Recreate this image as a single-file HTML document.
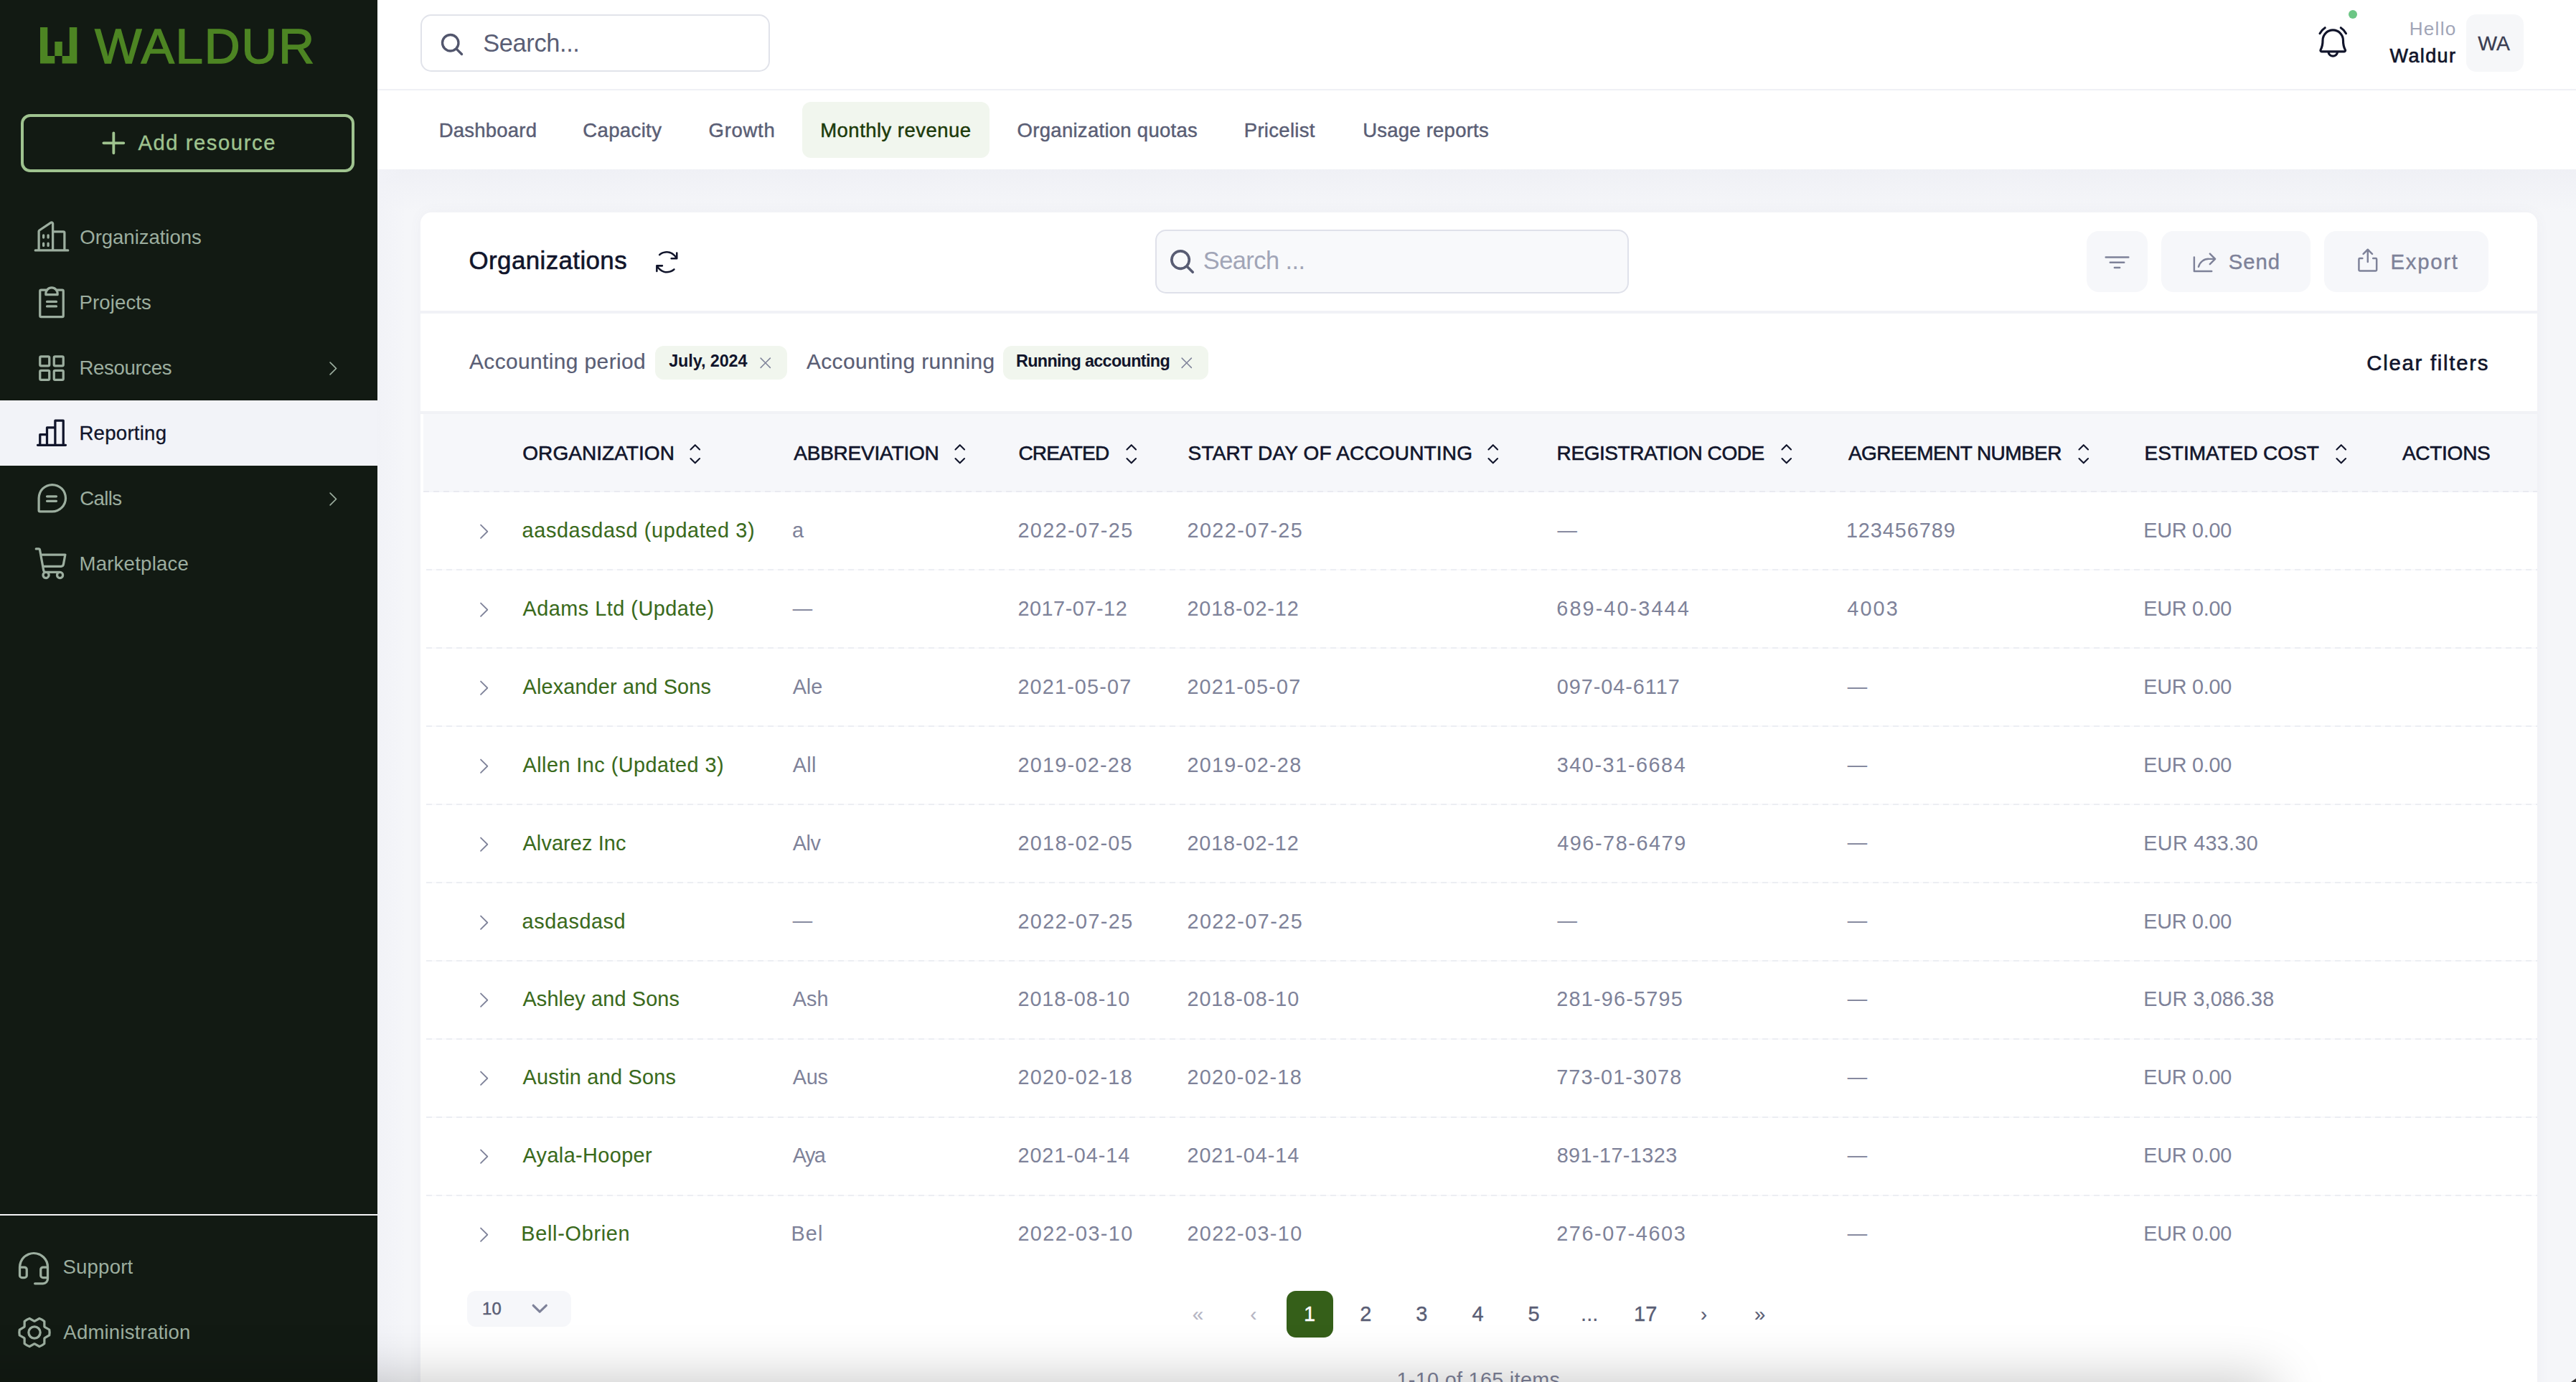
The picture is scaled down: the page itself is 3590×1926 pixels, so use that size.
<!DOCTYPE html>
<html lang="en"><head><meta charset="utf-8"><title>Waldur - Monthly revenue</title>
<style>
html,body{margin:0;padding:0}
body{width:3590px;height:1926px;overflow:hidden;position:relative;background:#f5f6f9;font-family:"Liberation Sans",sans-serif;}
.b{position:absolute}
.i{position:absolute;display:block;overflow:visible}
.t{position:absolute;white-space:pre;display:block;margin:0;padding:0;border:0;background:none;font-family:inherit;font-weight:400;text-decoration:none;text-align:left}
#shade{position:absolute;left:-200px;top:1932px;width:3360px;height:100px;border-radius:0 0 90px 0;box-shadow:0 0 75px 10px rgba(0,0,0,0.22);}
</style></head>
<body>
<main>
<section id="bg"><div class="b" style="left:526.00px;top:236.20px;width:3064.00px;height:1689.80px;background:linear-gradient(#eff0f5,#f5f6f9 60px,#f5f6f9)"></div>
<div class="b" style="left:526.00px;top:236.20px;width:40.00px;height:1689.80px;background:linear-gradient(90deg,#f1f2f7,rgba(245,246,249,0))"></div></section>
<header id="top"><div class="b" style="left:526.00px;top:0.00px;width:3064.00px;height:124.00px;background:#fff"></div>
<div class="b" style="left:526.00px;top:124.00px;width:3064.00px;height:2.00px;background:#eff0f5"></div>
<div class="b" style="left:586.40px;top:20.30px;width:487.10px;height:79.30px;border:2px solid #e1e3ea;border-radius:15px;box-sizing:border-box;background:#fff"></div>
<svg class="i" style="left:612.30px;top:44.20px" width="36" height="36" viewBox="0 0 256 256" fill="#52566d"><path d="M232.49,215.51,185,168a92.12,92.12,0,1,0-17,17l47.53,47.54a12,12,0,0,0,17-17ZM44,112a68,68,0,1,1,68,68A68.07,68.07,0,0,1,44,112Z"/></svg>
<span class="t" style="left:673.22px;top:42.88px;font-size:34.4px;line-height:34.4px;color:#5a5e75;letter-spacing:-0.370px;">Search...</span>
<svg class="i" style="left:3225.75px;top:34.35px" width="50.5" height="50.5" viewBox="0 0 256 256" fill="#11152b"><path d="M224,71.1a8,8,0,0,1-10.78-3.42,94.13,94.13,0,0,0-33.46-36.91,8,8,0,1,1,8.54-13.54,111.46,111.46,0,0,1,39.12,43.09A8,8,0,0,1,224,71.1ZM35.71,72a8,8,0,0,0,7.1-4.32A94.13,94.13,0,0,1,76.27,30.77a8,8,0,1,0-8.54-13.54A111.46,111.46,0,0,0,28.61,60.32,8,8,0,0,0,35.71,72Zm186.1,103.94A16,16,0,0,1,208,200H167.2a40,40,0,0,1-78.4,0H48a16,16,0,0,1-13.79-24.06C43.22,160.39,48,138.28,48,112a80,80,0,0,1,160,0C208,138.27,212.78,160.38,221.81,175.94ZM150.62,200H105.38a24,24,0,0,0,45.24,0ZM208,184c-10.64-18.27-16-42.49-16-72a64,64,0,0,0-128,0c0,29.52-5.38,53.74-16,72Z"/></svg>
<div class="b" style="left:3273.00px;top:14.00px;width:12.00px;height:12.00px;background:#6cc685;border-radius:50%"></div>
<span class="t" style="left:3357.76px;top:26.81px;font-size:26.1px;line-height:26.1px;color:#a1a5b7;letter-spacing:1.258px;">Hello</span>
<span class="t" style="left:3330.60px;top:64.94px;font-size:27px;line-height:27px;color:#11152b;letter-spacing:1.360px;-webkit-text-stroke:0.7px #11152b;">Waldur</span>
<div class="b" style="left:3437.00px;top:20.00px;width:80.00px;height:80.00px;background:#f6f7f9;border-radius:14px"></div>
<span class="t" style="left:3453.30px;top:45.96px;font-size:28.4px;line-height:28.4px;color:#3a3d52;letter-spacing:-0.122px;-webkit-text-stroke:0.3px #3a3d52;">WA</span></header>
<nav id="tabs"><div class="b" style="left:526.00px;top:126.00px;width:3064.00px;height:110.20px;background:#fff"></div>
<div class="b" style="left:1117.90px;top:142.20px;width:261.00px;height:77.60px;background:#f1f6ee;border-radius:12px"></div>
<a class="t" style="left:611.75px;top:167.62px;font-size:27.5px;line-height:27.5px;color:#5a5e75;letter-spacing:0.220px;-webkit-text-stroke:0.45px #5a5e75;">Dashboard</a>
<a class="t" style="left:812.31px;top:167.62px;font-size:27.5px;line-height:27.5px;color:#5a5e75;letter-spacing:0.370px;-webkit-text-stroke:0.45px #5a5e75;">Capacity</a>
<a class="t" style="left:987.61px;top:167.62px;font-size:27.5px;line-height:27.5px;color:#5a5e75;letter-spacing:0.698px;-webkit-text-stroke:0.45px #5a5e75;">Growth</a>
<a class="t" style="left:1143.25px;top:167.62px;font-size:27.5px;line-height:27.5px;color:#1c3a0a;letter-spacing:0.460px;-webkit-text-stroke:0.45px #1c3a0a;">Monthly revenue</a>
<a class="t" style="left:1417.61px;top:167.62px;font-size:27.5px;line-height:27.5px;color:#5a5e75;letter-spacing:0.284px;-webkit-text-stroke:0.45px #5a5e75;">Organization quotas</a>
<a class="t" style="left:1733.75px;top:167.62px;font-size:27.5px;line-height:27.5px;color:#5a5e75;letter-spacing:0.298px;-webkit-text-stroke:0.45px #5a5e75;">Pricelist</a>
<a class="t" style="left:1899.28px;top:167.62px;font-size:27.5px;line-height:27.5px;color:#5a5e75;letter-spacing:0.221px;-webkit-text-stroke:0.45px #5a5e75;">Usage reports</a></nav>
<section id="card"><div class="b" style="left:586.00px;top:296.00px;width:2950.00px;height:1670.00px;background:#fff;border-radius:15px;box-shadow:0 0 18px rgba(90,100,140,0.05)"></div>
<span class="t" style="left:653.56px;top:346.46px;font-size:34.9px;line-height:34.9px;color:#11152b;letter-spacing:0.396px;-webkit-text-stroke:0.6px #11152b;">Organizations</span>
<svg class="i" style="left:908.70px;top:344.70px" width="40.6" height="40.6" viewBox="0 0 256 256" fill="#11152b"><path d="M197.67,186.37a8,8,0,0,1,0,11.29C196.58,198.73,170.82,224,128,224c-37.39,0-64.53-22.4-80-39.85V208a8,8,0,0,1-16,0V160a8,8,0,0,1,8-8H88a8,8,0,0,1,0,16H55.44C67.76,183.35,93,208,128,208c36.1,0,58.14-21.4,58.36-21.62A8,8,0,0,1,197.67,186.37ZM216,40a8,8,0,0,0-8,8V71.85C192.53,54.4,165.39,32,128,32,85.18,32,59.42,57.27,58.34,58.34a8,8,0,0,0,11.3,11.34C69.86,69.4,91.9,48,128,48c35,0,60.24,24.65,72.56,40H168a8,8,0,0,0,0,16h48a8,8,0,0,0,8-8V48A8,8,0,0,0,216,40Z"/></svg>
<div class="b" style="left:1609.70px;top:320.20px;width:660.30px;height:88.40px;border:2px solid #dfe1ea;border-radius:15px;box-sizing:border-box;background:#f8f9fb"></div>
<svg class="i" style="left:1628.35px;top:345.15px" width="39.1" height="39.1" viewBox="0 0 256 256" fill="#585c73"><path d="M232.49,215.51,185,168a92.12,92.12,0,1,0-17,17l47.53,47.54a12,12,0,0,0,17-17ZM44,112a68,68,0,1,1,68,68A68.07,68.07,0,0,1,44,112Z"/></svg>
<span class="t" style="left:1676.82px;top:345.78px;font-size:34.4px;line-height:34.4px;color:#a1a5b7;letter-spacing:-0.546px;">Search ...</span>
<div class="b" style="left:2908.00px;top:322.00px;width:85.00px;height:84.50px;background:#f6f7fa;border-radius:17px"></div>
<svg class="i" style="left:2931.10px;top:344.90px" width="39" height="39" viewBox="0 0 256 256" fill="#7e8299"><path d="M200,136a8,8,0,0,1-8,8H64a8,8,0,0,1,0-16H192A8,8,0,0,1,200,136Zm32-56H24a8,8,0,0,0,0,16H232a8,8,0,0,0,0-16Zm-80,96H104a8,8,0,0,0,0,16h48a8,8,0,0,0,0-16Z"/></svg>
<div class="b" style="left:3012.20px;top:322.00px;width:207.80px;height:84.50px;background:#f6f7fa;border-radius:17px"></div>
<svg class="i" style="left:3052.80px;top:345.10px" width="39" height="39" viewBox="0 0 256 256" fill="#7e8299"><path d="M229.66,109.66l-48,48a8,8,0,0,1-11.32-11.32L204.69,112H165a88,88,0,0,0-85.23,66,8,8,0,0,1-15.5-4A103.94,103.94,0,0,1,165,96h39.71L170.34,61.66a8,8,0,0,1,11.32-11.32l48,48A8,8,0,0,1,229.66,109.66ZM192,208H40V88a8,8,0,0,0-16,0V216a8,8,0,0,0,8,8H192a8,8,0,0,0,0-16Z"/></svg>
<button class="t" style="left:3105.78px;top:350.00px;font-size:29.3px;line-height:29.3px;color:#7e8299;letter-spacing:0.977px;-webkit-text-stroke:0.4px #7e8299;">Send</button>
<div class="b" style="left:3239.30px;top:322.00px;width:228.50px;height:84.50px;background:#f6f7fa;border-radius:17px"></div>
<svg class="i" style="left:3280.20px;top:344.40px" width="39.6" height="39.6" viewBox="0 0 256 256" fill="#7e8299"><path d="M216,112v96a16,16,0,0,1-16,16H56a16,16,0,0,1-16-16V112A16,16,0,0,1,56,96H80a8,8,0,0,1,0,16H56v96H200V112H176a8,8,0,0,1,0-16h24A16,16,0,0,1,216,112ZM93.66,69.66,120,43.31V136a8,8,0,0,0,16,0V43.31l26.34,26.35a8,8,0,0,0,11.32-11.32l-40-40a8,8,0,0,0-11.32,0l-40,40A8,8,0,0,0,93.66,69.66Z"/></svg>
<button class="t" style="left:3331.51px;top:350.00px;font-size:29.3px;line-height:29.3px;color:#7e8299;letter-spacing:1.743px;-webkit-text-stroke:0.4px #7e8299;">Export</button>
<div class="b" style="left:586.00px;top:433.00px;width:2950.00px;height:4.00px;background:#f1f2f6"></div>
<span class="t" style="left:654.00px;top:489.49px;font-size:29.9px;line-height:29.9px;color:#5a5e75;letter-spacing:0.399px;-webkit-text-stroke:0.2px #5a5e75;">Accounting period</span>
<div class="b" style="left:913.00px;top:482.00px;width:183.80px;height:46.80px;background:#f1f6ee;border-radius:12px"></div>
<span class="t" style="left:932.20px;top:492.29px;font-size:23.4px;line-height:23.4px;color:#11152b;letter-spacing:-0.084px;font-weight:700;">July, 2024</span>
<svg class="i" style="left:1055.05px;top:494.25px" width="23.5" height="23.5" viewBox="0 0 256 256" fill="#7e8299"><path d="M205.66,194.34a8,8,0,0,1-11.32,11.32L128,139.31,61.66,205.66a8,8,0,0,1-11.32-11.32L116.69,128,50.34,61.66A8,8,0,0,1,61.66,50.34L128,116.69l66.34-66.35a8,8,0,0,1,11.32,11.32L139.31,128Z"/></svg>
<span class="t" style="left:1124.00px;top:489.49px;font-size:29.9px;line-height:29.9px;color:#5a5e75;letter-spacing:0.363px;-webkit-text-stroke:0.2px #5a5e75;">Accounting running</span>
<div class="b" style="left:1398.00px;top:482.00px;width:286.20px;height:46.80px;background:#f1f6ee;border-radius:12px"></div>
<span class="t" style="left:1415.94px;top:492.29px;font-size:23.4px;line-height:23.4px;color:#11152b;letter-spacing:-0.666px;font-weight:700;">Running accounting</span>
<svg class="i" style="left:1642.15px;top:494.25px" width="23.5" height="23.5" viewBox="0 0 256 256" fill="#7e8299"><path d="M205.66,194.34a8,8,0,0,1-11.32,11.32L128,139.31,61.66,205.66a8,8,0,0,1-11.32-11.32L116.69,128,50.34,61.66A8,8,0,0,1,61.66,50.34L128,116.69l66.34-66.35a8,8,0,0,1,11.32,11.32L139.31,128Z"/></svg>
<button class="t" style="left:3298.33px;top:490.60px;font-size:29.3px;line-height:29.3px;color:#11152b;letter-spacing:1.736px;-webkit-text-stroke:0.6px #11152b;">Clear filters</button>
<div class="b" style="left:586.00px;top:572.80px;width:2950.00px;height:4.20px;background:#f1f2f6"></div>
<div class="b" style="left:590.00px;top:577.00px;width:2946.00px;height:107.00px;background:#f6f7fa"></div>
<div class="b" style="left:590.00px;top:683.60px;width:2946.00px;height:2.00px;background:repeating-linear-gradient(90deg,#e9eaf1 0 8px,#f4f5f9 8px 14px)"></div>
<span class="t" style="left:728.29px;top:617.70px;font-size:28px;line-height:28px;color:#11152b;letter-spacing:0.049px;-webkit-text-stroke:0.6px #11152b;">ORGANIZATION</span>
<svg class="i" style="left:952.25px;top:616.25px" width="33.5" height="33.5" viewBox="0 0 256 256" fill="#11152b"><path d="M181.66,170.34a8,8,0,0,1,0,11.32l-48,48a8,8,0,0,1-11.32,0l-48-48a8,8,0,0,1,11.32-11.32L128,212.69l42.34-42.35A8,8,0,0,1,181.66,170.34Zm-96-84.68L128,43.31l42.34,42.35a8,8,0,0,0,11.32-11.32l-48-48a8,8,0,0,0-11.32,0l-48,48A8,8,0,0,0,85.66,85.66Z"/></svg>
<span class="t" style="left:1106.20px;top:617.70px;font-size:28px;line-height:28px;color:#11152b;letter-spacing:-0.207px;-webkit-text-stroke:0.6px #11152b;">ABBREVIATION</span>
<svg class="i" style="left:1321.25px;top:616.25px" width="33.5" height="33.5" viewBox="0 0 256 256" fill="#11152b"><path d="M181.66,170.34a8,8,0,0,1,0,11.32l-48,48a8,8,0,0,1-11.32,0l-48-48a8,8,0,0,1,11.32-11.32L128,212.69l42.34-42.35A8,8,0,0,1,181.66,170.34Zm-96-84.68L128,43.31l42.34,42.35a8,8,0,0,0,11.32-11.32l-48-48a8,8,0,0,0-11.32,0l-48,48A8,8,0,0,0,85.66,85.66Z"/></svg>
<span class="t" style="left:1419.39px;top:617.70px;font-size:28px;line-height:28px;color:#11152b;letter-spacing:-0.824px;-webkit-text-stroke:0.6px #11152b;">CREATED</span>
<svg class="i" style="left:1560.45px;top:616.25px" width="33.5" height="33.5" viewBox="0 0 256 256" fill="#11152b"><path d="M181.66,170.34a8,8,0,0,1,0,11.32l-48,48a8,8,0,0,1-11.32,0l-48-48a8,8,0,0,1,11.32-11.32L128,212.69l42.34-42.35A8,8,0,0,1,181.66,170.34Zm-96-84.68L128,43.31l42.34,42.35a8,8,0,0,0,11.32-11.32l-48-48a8,8,0,0,0-11.32,0l-48,48A8,8,0,0,0,85.66,85.66Z"/></svg>
<span class="t" style="left:1655.62px;top:617.70px;font-size:28px;line-height:28px;color:#11152b;letter-spacing:0.172px;-webkit-text-stroke:0.6px #11152b;">START DAY OF ACCOUNTING</span>
<svg class="i" style="left:2064.45px;top:616.25px" width="33.5" height="33.5" viewBox="0 0 256 256" fill="#11152b"><path d="M181.66,170.34a8,8,0,0,1,0,11.32l-48,48a8,8,0,0,1-11.32,0l-48-48a8,8,0,0,1,11.32-11.32L128,212.69l42.34-42.35A8,8,0,0,1,181.66,170.34Zm-96-84.68L128,43.31l42.34,42.35a8,8,0,0,0,11.32-11.32l-48-48a8,8,0,0,0-11.32,0l-48,48A8,8,0,0,0,85.66,85.66Z"/></svg>
<span class="t" style="left:2169.61px;top:617.70px;font-size:28px;line-height:28px;color:#11152b;letter-spacing:-0.440px;-webkit-text-stroke:0.6px #11152b;">REGISTRATION CODE</span>
<svg class="i" style="left:2472.85px;top:616.25px" width="33.5" height="33.5" viewBox="0 0 256 256" fill="#11152b"><path d="M181.66,170.34a8,8,0,0,1,0,11.32l-48,48a8,8,0,0,1-11.32,0l-48-48a8,8,0,0,1,11.32-11.32L128,212.69l42.34-42.35A8,8,0,0,1,181.66,170.34Zm-96-84.68L128,43.31l42.34,42.35a8,8,0,0,0,11.32-11.32l-48-48a8,8,0,0,0-11.32,0l-48,48A8,8,0,0,0,85.66,85.66Z"/></svg>
<span class="t" style="left:2576.00px;top:617.70px;font-size:28px;line-height:28px;color:#11152b;letter-spacing:-0.573px;-webkit-text-stroke:0.6px #11152b;">AGREEMENT NUMBER</span>
<svg class="i" style="left:2887.05px;top:616.25px" width="33.5" height="33.5" viewBox="0 0 256 256" fill="#11152b"><path d="M181.66,170.34a8,8,0,0,1,0,11.32l-48,48a8,8,0,0,1-11.32,0l-48-48a8,8,0,0,1,11.32-11.32L128,212.69l42.34-42.35A8,8,0,0,1,181.66,170.34Zm-96-84.68L128,43.31l42.34,42.35a8,8,0,0,0,11.32-11.32l-48-48a8,8,0,0,0-11.32,0l-48,48A8,8,0,0,0,85.66,85.66Z"/></svg>
<span class="t" style="left:2988.61px;top:617.70px;font-size:28px;line-height:28px;color:#11152b;letter-spacing:-0.043px;-webkit-text-stroke:0.6px #11152b;">ESTIMATED COST</span>
<svg class="i" style="left:3245.95px;top:616.25px" width="33.5" height="33.5" viewBox="0 0 256 256" fill="#11152b"><path d="M181.66,170.34a8,8,0,0,1,0,11.32l-48,48a8,8,0,0,1-11.32,0l-48-48a8,8,0,0,1,11.32-11.32L128,212.69l42.34-42.35A8,8,0,0,1,181.66,170.34Zm-96-84.68L128,43.31l42.34,42.35a8,8,0,0,0,11.32-11.32l-48-48a8,8,0,0,0-11.32,0l-48,48A8,8,0,0,0,85.66,85.66Z"/></svg>
<span class="t" style="left:3347.90px;top:617.70px;font-size:28px;line-height:28px;color:#11152b;letter-spacing:-0.264px;-webkit-text-stroke:0.6px #11152b;">ACTIONS</span>
<svg class="i" style="left:659.45px;top:726.35px" width="29.5" height="29.5" viewBox="0 0 256 256" fill="#7e8299"><path d="M181.66,133.66l-80,80a8,8,0,0,1-11.32-11.32L164.69,128,90.34,53.66a8,8,0,0,1,11.32-11.32l80,80A8,8,0,0,1,181.66,133.66Z"/></svg>
<a class="t" style="left:727.60px;top:725.32px;font-size:28.8px;line-height:28.8px;color:#3a6a1c;letter-spacing:0.633px;-webkit-text-stroke:0.1px #3a6a1c;">aasdasdasd (updated 3)</a>
<span class="t" style="left:1103.90px;top:725.32px;font-size:28.8px;line-height:28.8px;color:#7e8299;">a</span>
<span class="t" style="left:1418.45px;top:725.32px;font-size:28.8px;line-height:28.8px;color:#7e8299;letter-spacing:1.379px;">2022-07-25</span>
<span class="t" style="left:1654.45px;top:725.32px;font-size:28.8px;line-height:28.8px;color:#7e8299;letter-spacing:1.435px;">2022-07-25</span>
<span class="t" style="left:2170.60px;top:724.99px;font-size:27.3px;line-height:27.3px;color:#7e8299;-webkit-text-stroke:0.15px #7e8299;">—</span>
<span class="t" style="left:2572.90px;top:725.32px;font-size:28.8px;line-height:28.8px;color:#7e8299;letter-spacing:0.953px;">123456789</span>
<span class="t" style="left:2987.35px;top:725.32px;font-size:28.8px;line-height:28.8px;color:#7e8299;letter-spacing:-0.284px;">EUR 0.00</span>
<div class="b" style="left:594.00px;top:793.30px;width:2942.00px;height:2.00px;background:repeating-linear-gradient(90deg,#eceef3 0 8px,#fafafc 8px 14px)"></div>
<svg class="i" style="left:659.45px;top:835.20px" width="29.5" height="29.5" viewBox="0 0 256 256" fill="#7e8299"><path d="M181.66,133.66l-80,80a8,8,0,0,1-11.32-11.32L164.69,128,90.34,53.66a8,8,0,0,1,11.32-11.32l80,80A8,8,0,0,1,181.66,133.66Z"/></svg>
<a class="t" style="left:728.50px;top:834.17px;font-size:28.8px;line-height:28.8px;color:#3a6a1c;letter-spacing:0.516px;-webkit-text-stroke:0.1px #3a6a1c;">Adams Ltd (Update)</a>
<span class="t" style="left:1104.80px;top:833.84px;font-size:27.3px;line-height:27.3px;color:#7e8299;-webkit-text-stroke:0.15px #7e8299;">—</span>
<span class="t" style="left:1418.45px;top:834.17px;font-size:28.8px;line-height:28.8px;color:#7e8299;letter-spacing:0.546px;">2017-07-12</span>
<span class="t" style="left:1654.45px;top:834.17px;font-size:28.8px;line-height:28.8px;color:#7e8299;letter-spacing:0.879px;">2018-02-12</span>
<span class="t" style="left:2169.25px;top:834.17px;font-size:28.8px;line-height:28.8px;color:#7e8299;letter-spacing:2.114px;">689-40-3444</span>
<span class="t" style="left:2574.25px;top:834.17px;font-size:28.8px;line-height:28.8px;color:#7e8299;letter-spacing:2.116px;">4003</span>
<span class="t" style="left:2987.35px;top:834.17px;font-size:28.8px;line-height:28.8px;color:#7e8299;letter-spacing:-0.284px;">EUR 0.00</span>
<div class="b" style="left:594.00px;top:902.30px;width:2942.00px;height:2.00px;background:repeating-linear-gradient(90deg,#eceef3 0 8px,#fafafc 8px 14px)"></div>
<svg class="i" style="left:659.45px;top:944.05px" width="29.5" height="29.5" viewBox="0 0 256 256" fill="#7e8299"><path d="M181.66,133.66l-80,80a8,8,0,0,1-11.32-11.32L164.69,128,90.34,53.66a8,8,0,0,1,11.32-11.32l80,80A8,8,0,0,1,181.66,133.66Z"/></svg>
<a class="t" style="left:728.50px;top:943.02px;font-size:28.8px;line-height:28.8px;color:#3a6a1c;letter-spacing:0.178px;-webkit-text-stroke:0.1px #3a6a1c;">Alexander and Sons</a>
<span class="t" style="left:1104.80px;top:943.02px;font-size:28.8px;line-height:28.8px;color:#7e8299;letter-spacing:-0.130px;">Ale</span>
<span class="t" style="left:1418.45px;top:943.02px;font-size:28.8px;line-height:28.8px;color:#7e8299;letter-spacing:1.157px;">2021-05-07</span>
<span class="t" style="left:1654.45px;top:943.02px;font-size:28.8px;line-height:28.8px;color:#7e8299;letter-spacing:1.157px;">2021-05-07</span>
<span class="t" style="left:2169.70px;top:943.02px;font-size:28.8px;line-height:28.8px;color:#7e8299;letter-spacing:0.978px;">097-04-6117</span>
<span class="t" style="left:2574.70px;top:942.69px;font-size:27.3px;line-height:27.3px;color:#7e8299;-webkit-text-stroke:0.15px #7e8299;">—</span>
<span class="t" style="left:2987.35px;top:943.02px;font-size:28.8px;line-height:28.8px;color:#7e8299;letter-spacing:-0.284px;">EUR 0.00</span>
<div class="b" style="left:594.00px;top:1011.30px;width:2942.00px;height:2.00px;background:repeating-linear-gradient(90deg,#eceef3 0 8px,#fafafc 8px 14px)"></div>
<svg class="i" style="left:659.45px;top:1052.90px" width="29.5" height="29.5" viewBox="0 0 256 256" fill="#7e8299"><path d="M181.66,133.66l-80,80a8,8,0,0,1-11.32-11.32L164.69,128,90.34,53.66a8,8,0,0,1,11.32-11.32l80,80A8,8,0,0,1,181.66,133.66Z"/></svg>
<a class="t" style="left:728.50px;top:1051.87px;font-size:28.8px;line-height:28.8px;color:#3a6a1c;letter-spacing:0.473px;-webkit-text-stroke:0.1px #3a6a1c;">Allen Inc (Updated 3)</a>
<span class="t" style="left:1104.80px;top:1051.87px;font-size:28.8px;line-height:28.8px;color:#7e8299;letter-spacing:0.291px;">All</span>
<span class="t" style="left:1418.45px;top:1051.87px;font-size:28.8px;line-height:28.8px;color:#7e8299;letter-spacing:1.268px;">2019-02-28</span>
<span class="t" style="left:1654.45px;top:1051.87px;font-size:28.8px;line-height:28.8px;color:#7e8299;letter-spacing:1.268px;">2019-02-28</span>
<span class="t" style="left:2169.70px;top:1051.87px;font-size:28.8px;line-height:28.8px;color:#7e8299;letter-spacing:1.569px;">340-31-6684</span>
<span class="t" style="left:2574.70px;top:1051.54px;font-size:27.3px;line-height:27.3px;color:#7e8299;-webkit-text-stroke:0.15px #7e8299;">—</span>
<span class="t" style="left:2987.35px;top:1051.87px;font-size:28.8px;line-height:28.8px;color:#7e8299;letter-spacing:-0.284px;">EUR 0.00</span>
<div class="b" style="left:594.00px;top:1120.30px;width:2942.00px;height:2.00px;background:repeating-linear-gradient(90deg,#eceef3 0 8px,#fafafc 8px 14px)"></div>
<svg class="i" style="left:659.45px;top:1161.75px" width="29.5" height="29.5" viewBox="0 0 256 256" fill="#7e8299"><path d="M181.66,133.66l-80,80a8,8,0,0,1-11.32-11.32L164.69,128,90.34,53.66a8,8,0,0,1,11.32-11.32l80,80A8,8,0,0,1,181.66,133.66Z"/></svg>
<a class="t" style="left:728.50px;top:1160.72px;font-size:28.8px;line-height:28.8px;color:#3a6a1c;letter-spacing:0.150px;-webkit-text-stroke:0.1px #3a6a1c;">Alvarez Inc</a>
<span class="t" style="left:1104.80px;top:1160.72px;font-size:28.8px;line-height:28.8px;color:#7e8299;letter-spacing:-0.408px;">Alv</span>
<span class="t" style="left:1418.45px;top:1160.72px;font-size:28.8px;line-height:28.8px;color:#7e8299;letter-spacing:1.323px;">2018-02-05</span>
<span class="t" style="left:1654.45px;top:1160.72px;font-size:28.8px;line-height:28.8px;color:#7e8299;letter-spacing:0.879px;">2018-02-12</span>
<span class="t" style="left:2170.15px;top:1160.72px;font-size:28.8px;line-height:28.8px;color:#7e8299;letter-spacing:1.569px;">496-78-6479</span>
<span class="t" style="left:2574.70px;top:1160.39px;font-size:27.3px;line-height:27.3px;color:#7e8299;-webkit-text-stroke:0.15px #7e8299;">—</span>
<span class="t" style="left:2987.35px;top:1160.72px;font-size:28.8px;line-height:28.8px;color:#7e8299;letter-spacing:0.276px;">EUR 433.30</span>
<div class="b" style="left:594.00px;top:1229.30px;width:2942.00px;height:2.00px;background:repeating-linear-gradient(90deg,#eceef3 0 8px,#fafafc 8px 14px)"></div>
<svg class="i" style="left:659.45px;top:1270.60px" width="29.5" height="29.5" viewBox="0 0 256 256" fill="#7e8299"><path d="M181.66,133.66l-80,80a8,8,0,0,1-11.32-11.32L164.69,128,90.34,53.66a8,8,0,0,1,11.32-11.32l80,80A8,8,0,0,1,181.66,133.66Z"/></svg>
<a class="t" style="left:727.60px;top:1269.57px;font-size:28.8px;line-height:28.8px;color:#3a6a1c;letter-spacing:0.590px;-webkit-text-stroke:0.1px #3a6a1c;">asdasdasd</a>
<span class="t" style="left:1104.80px;top:1269.24px;font-size:27.3px;line-height:27.3px;color:#7e8299;-webkit-text-stroke:0.15px #7e8299;">—</span>
<span class="t" style="left:1418.45px;top:1269.57px;font-size:28.8px;line-height:28.8px;color:#7e8299;letter-spacing:1.379px;">2022-07-25</span>
<span class="t" style="left:1654.45px;top:1269.57px;font-size:28.8px;line-height:28.8px;color:#7e8299;letter-spacing:1.435px;">2022-07-25</span>
<span class="t" style="left:2170.60px;top:1269.24px;font-size:27.3px;line-height:27.3px;color:#7e8299;-webkit-text-stroke:0.15px #7e8299;">—</span>
<span class="t" style="left:2574.70px;top:1269.24px;font-size:27.3px;line-height:27.3px;color:#7e8299;-webkit-text-stroke:0.15px #7e8299;">—</span>
<span class="t" style="left:2987.35px;top:1269.57px;font-size:28.8px;line-height:28.8px;color:#7e8299;letter-spacing:-0.284px;">EUR 0.00</span>
<div class="b" style="left:594.00px;top:1338.30px;width:2942.00px;height:2.00px;background:repeating-linear-gradient(90deg,#eceef3 0 8px,#fafafc 8px 14px)"></div>
<svg class="i" style="left:659.45px;top:1379.45px" width="29.5" height="29.5" viewBox="0 0 256 256" fill="#7e8299"><path d="M181.66,133.66l-80,80a8,8,0,0,1-11.32-11.32L164.69,128,90.34,53.66a8,8,0,0,1,11.32-11.32l80,80A8,8,0,0,1,181.66,133.66Z"/></svg>
<a class="t" style="left:728.50px;top:1378.42px;font-size:28.8px;line-height:28.8px;color:#3a6a1c;letter-spacing:0.162px;-webkit-text-stroke:0.1px #3a6a1c;">Ashley and Sons</a>
<span class="t" style="left:1104.80px;top:1378.42px;font-size:28.8px;line-height:28.8px;color:#7e8299;letter-spacing:0.095px;">Ash</span>
<span class="t" style="left:1418.45px;top:1378.42px;font-size:28.8px;line-height:28.8px;color:#7e8299;letter-spacing:0.940px;">2018-08-10</span>
<span class="t" style="left:1654.45px;top:1378.42px;font-size:28.8px;line-height:28.8px;color:#7e8299;letter-spacing:0.940px;">2018-08-10</span>
<span class="t" style="left:2169.25px;top:1378.42px;font-size:28.8px;line-height:28.8px;color:#7e8299;letter-spacing:1.209px;">281-96-5795</span>
<span class="t" style="left:2574.70px;top:1378.09px;font-size:27.3px;line-height:27.3px;color:#7e8299;-webkit-text-stroke:0.15px #7e8299;">—</span>
<span class="t" style="left:2987.35px;top:1378.42px;font-size:28.8px;line-height:28.8px;color:#7e8299;letter-spacing:0.084px;">EUR 3,086.38</span>
<div class="b" style="left:594.00px;top:1447.30px;width:2942.00px;height:2.00px;background:repeating-linear-gradient(90deg,#eceef3 0 8px,#fafafc 8px 14px)"></div>
<svg class="i" style="left:659.45px;top:1488.30px" width="29.5" height="29.5" viewBox="0 0 256 256" fill="#7e8299"><path d="M181.66,133.66l-80,80a8,8,0,0,1-11.32-11.32L164.69,128,90.34,53.66a8,8,0,0,1,11.32-11.32l80,80A8,8,0,0,1,181.66,133.66Z"/></svg>
<a class="t" style="left:728.50px;top:1487.27px;font-size:28.8px;line-height:28.8px;color:#3a6a1c;letter-spacing:0.262px;-webkit-text-stroke:0.1px #3a6a1c;">Austin and Sons</a>
<span class="t" style="left:1104.80px;top:1487.27px;font-size:28.8px;line-height:28.8px;color:#7e8299;letter-spacing:-0.263px;">Aus</span>
<span class="t" style="left:1418.45px;top:1487.27px;font-size:28.8px;line-height:28.8px;color:#7e8299;letter-spacing:1.323px;">2020-02-18</span>
<span class="t" style="left:1654.45px;top:1487.27px;font-size:28.8px;line-height:28.8px;color:#7e8299;letter-spacing:1.323px;">2020-02-18</span>
<span class="t" style="left:2169.25px;top:1487.27px;font-size:28.8px;line-height:28.8px;color:#7e8299;letter-spacing:1.059px;">773-01-3078</span>
<span class="t" style="left:2574.70px;top:1486.94px;font-size:27.3px;line-height:27.3px;color:#7e8299;-webkit-text-stroke:0.15px #7e8299;">—</span>
<span class="t" style="left:2987.35px;top:1487.27px;font-size:28.8px;line-height:28.8px;color:#7e8299;letter-spacing:-0.284px;">EUR 0.00</span>
<div class="b" style="left:594.00px;top:1556.30px;width:2942.00px;height:2.00px;background:repeating-linear-gradient(90deg,#eceef3 0 8px,#fafafc 8px 14px)"></div>
<svg class="i" style="left:659.45px;top:1597.15px" width="29.5" height="29.5" viewBox="0 0 256 256" fill="#7e8299"><path d="M181.66,133.66l-80,80a8,8,0,0,1-11.32-11.32L164.69,128,90.34,53.66a8,8,0,0,1,11.32-11.32l80,80A8,8,0,0,1,181.66,133.66Z"/></svg>
<a class="t" style="left:728.50px;top:1596.12px;font-size:28.8px;line-height:28.8px;color:#3a6a1c;letter-spacing:0.417px;-webkit-text-stroke:0.1px #3a6a1c;">Ayala-Hooper</a>
<span class="t" style="left:1104.80px;top:1596.12px;font-size:28.8px;line-height:28.8px;color:#7e8299;letter-spacing:-1.547px;">Aya</span>
<span class="t" style="left:1418.45px;top:1596.12px;font-size:28.8px;line-height:28.8px;color:#7e8299;letter-spacing:0.940px;">2021-04-14</span>
<span class="t" style="left:1654.45px;top:1596.12px;font-size:28.8px;line-height:28.8px;color:#7e8299;letter-spacing:0.940px;">2021-04-14</span>
<span class="t" style="left:2169.70px;top:1596.12px;font-size:28.8px;line-height:28.8px;color:#7e8299;letter-spacing:0.414px;">891-17-1323</span>
<span class="t" style="left:2574.70px;top:1595.79px;font-size:27.3px;line-height:27.3px;color:#7e8299;-webkit-text-stroke:0.15px #7e8299;">—</span>
<span class="t" style="left:2987.35px;top:1596.12px;font-size:28.8px;line-height:28.8px;color:#7e8299;letter-spacing:-0.284px;">EUR 0.00</span>
<div class="b" style="left:594.00px;top:1665.30px;width:2942.00px;height:2.00px;background:repeating-linear-gradient(90deg,#eceef3 0 8px,#fafafc 8px 14px)"></div>
<svg class="i" style="left:659.45px;top:1706.00px" width="29.5" height="29.5" viewBox="0 0 256 256" fill="#7e8299"><path d="M181.66,133.66l-80,80a8,8,0,0,1-11.32-11.32L164.69,128,90.34,53.66a8,8,0,0,1,11.32-11.32l80,80A8,8,0,0,1,181.66,133.66Z"/></svg>
<a class="t" style="left:726.25px;top:1704.97px;font-size:28.8px;line-height:28.8px;color:#3a6a1c;letter-spacing:0.732px;-webkit-text-stroke:0.1px #3a6a1c;">Bell-Obrien</a>
<span class="t" style="left:1102.55px;top:1704.97px;font-size:28.8px;line-height:28.8px;color:#7e8299;letter-spacing:1.111px;">Bel</span>
<span class="t" style="left:1418.45px;top:1704.97px;font-size:28.8px;line-height:28.8px;color:#7e8299;letter-spacing:1.385px;">2022-03-10</span>
<span class="t" style="left:1654.45px;top:1704.97px;font-size:28.8px;line-height:28.8px;color:#7e8299;letter-spacing:1.385px;">2022-03-10</span>
<span class="t" style="left:2169.25px;top:1704.97px;font-size:28.8px;line-height:28.8px;color:#7e8299;letter-spacing:1.609px;">276-07-4603</span>
<span class="t" style="left:2574.70px;top:1704.64px;font-size:27.3px;line-height:27.3px;color:#7e8299;-webkit-text-stroke:0.15px #7e8299;">—</span>
<span class="t" style="left:2987.35px;top:1704.97px;font-size:28.8px;line-height:28.8px;color:#7e8299;letter-spacing:-0.284px;">EUR 0.00</span>
<div class="b" style="left:651.30px;top:1799.20px;width:144.30px;height:49.60px;background:#f6f7fa;border-radius:12px"></div>
<span class="t" style="left:671.91px;top:1812.15px;font-size:23.8px;line-height:23.8px;color:#5a5e75;letter-spacing:0.400px;-webkit-text-stroke:0.5px #5a5e75;">10</span>
<svg class="i" style="left:738px;top:1812px" width="28" height="22" viewBox="0 0 28 22" fill="none" stroke="#7e8299" stroke-width="3.2" stroke-linecap="round" stroke-linejoin="round"><path d="M5.2,7.3 L14.2,16.1 L23.3,7.3"/></svg>
<div class="b" style="left:1793.20px;top:1799.30px;width:64.60px;height:64.70px;background:#355f19;border-radius:13px"></div>
<a class="t" style="left:1661.68px;top:1818.32px;font-size:27.5px;line-height:27.5px;color:#b5b5c3;-webkit-text-stroke:0.2px #b5b5c3;">«</a>
<a class="t" style="left:1742.19px;top:1818.32px;font-size:27.5px;line-height:27.5px;color:#b5b5c3;-webkit-text-stroke:0.2px #b5b5c3;">‹</a>
<a class="t" style="left:1817.12px;top:1817.05px;font-size:29px;line-height:29px;color:#fff;-webkit-text-stroke:0.35px #fff;">1</a>
<a class="t" style="left:1895.14px;top:1817.05px;font-size:29px;line-height:29px;color:#5a5e75;-webkit-text-stroke:0.35px #5a5e75;">2</a>
<a class="t" style="left:1973.27px;top:1817.05px;font-size:29px;line-height:29px;color:#5a5e75;-webkit-text-stroke:0.35px #5a5e75;">3</a>
<a class="t" style="left:2051.47px;top:1817.05px;font-size:29px;line-height:29px;color:#5a5e75;-webkit-text-stroke:0.35px #5a5e75;">4</a>
<a class="t" style="left:2129.47px;top:1817.05px;font-size:29px;line-height:29px;color:#5a5e75;-webkit-text-stroke:0.35px #5a5e75;">5</a>
<a class="t" style="left:2203.09px;top:1817.05px;font-size:29px;line-height:29px;color:#5a5e75;-webkit-text-stroke:0.2px #5a5e75;">...</a>
<a class="t" style="left:2277.05px;top:1817.05px;font-size:29px;line-height:29px;color:#5a5e75;-webkit-text-stroke:0.35px #5a5e75;">17</a>
<a class="t" style="left:2370.09px;top:1818.32px;font-size:27.5px;line-height:27.5px;color:#5a5e75;-webkit-text-stroke:0.2px #5a5e75;">›</a>
<a class="t" style="left:2444.98px;top:1818.32px;font-size:27.5px;line-height:27.5px;color:#5a5e75;-webkit-text-stroke:0.2px #5a5e75;">»</a>
<span class="t" style="left:1946.50px;top:1908.62px;font-size:28.8px;line-height:28.8px;color:#7e8299;letter-spacing:0.306px;">1-10 of 165 items</span></section>
</main>
<aside id="side"><div class="b" style="left:0.00px;top:0.00px;width:526.00px;height:1926.00px;background:#121a13"></div>
<svg class="i" style="left:55.9px;top:37.9px" width="51.3" height="50.5" viewBox="0 0 51.3 50.5" fill="#4d8523"><path d="M0,0H10.3V40.1H20.3V50.5H0Z M20.3,19.9H30.8V40.1H20.3Z M40.8,0H51.3V50.5H30.6V40.1H40.8Z"/></svg>
<span class="t" style="left:132.30px;top:29.59px;font-size:69px;line-height:69px;color:#4d8523;letter-spacing:1.847px;-webkit-text-stroke:1.6px #4d8523;">WALDUR</span>
<div class="b" style="left:29.00px;top:159.00px;width:465.00px;height:81.00px;border:4px solid #9fc38f;border-radius:13px;box-sizing:border-box"></div>
<svg class="i" style="left:137.85px;top:178.65px" width="40.7" height="40.7" viewBox="0 0 256 256" fill="#9fc38f"><path d="M228,128a12,12,0,0,1-12,12H140v76a12,12,0,0,1-24,0V140H40a12,12,0,0,1,0-24h76V40a12,12,0,0,1,24,0v76h76A12,12,0,0,1,228,128Z"/></svg>
<button class="t" style="left:192.40px;top:184.58px;font-size:29.2px;line-height:29.2px;color:#9fc38f;letter-spacing:1.579px;-webkit-text-stroke:0.35px #9fc38f;">Add resource</button>
<div class="b" style="left:0.00px;top:558.00px;width:526.00px;height:91.00px;background:#f2f3f8"></div>
<svg class="i" style="left:45.70px;top:305.00px" width="52" height="52" viewBox="0 0 256 256" fill="#9cae9f"><path d="M240,208H224V96a16,16,0,0,0-16-16H144V32a16,16,0,0,0-24.88-13.32L39.12,72A16,16,0,0,0,32,85.34V208H16a8,8,0,0,0,0,16H240a8,8,0,0,0,0-16ZM208,96V208H144V96ZM48,85.34,128,32V208H48ZM112,112v16a8,8,0,0,1-16,0V112a8,8,0,1,1,16,0Zm-32,0v16a8,8,0,0,1-16,0V112a8,8,0,1,1,16,0Zm0,56v16a8,8,0,0,1-16,0V168a8,8,0,0,1,16,0Zm32,0v16a8,8,0,0,1-16,0V168a8,8,0,0,1,16,0Z"/></svg>
<a class="t" style="left:111.31px;top:316.74px;font-size:27.6px;line-height:27.6px;color:#9cae9f;letter-spacing:-0.067px;">Organizations</a>
<svg class="i" style="left:45.70px;top:396.00px" width="52" height="52" viewBox="0 0 256 256" fill="#9cae9f"><path d="M168,152a8,8,0,0,1-8,8H96a8,8,0,0,1,0-16h64A8,8,0,0,1,168,152Zm-8-40H96a8,8,0,0,0,0,16h64a8,8,0,0,0,0-16Zm56-64V216a16,16,0,0,1-16,16H56a16,16,0,0,1-16-16V48A16,16,0,0,1,56,32H92.26a47.92,47.92,0,0,1,71.48,0H200A16,16,0,0,1,216,48ZM96,64h64a32,32,0,0,0-64,0ZM200,48H173.25A47.93,47.93,0,0,1,176,64v8a8,8,0,0,1-8,8H88a8,8,0,0,1-8-8V64a47.93,47.93,0,0,1,2.75-16H56V216H200Z"/></svg>
<a class="t" style="left:110.44px;top:407.74px;font-size:27.6px;line-height:27.6px;color:#9cae9f;letter-spacing:0.105px;">Projects</a>
<svg class="i" style="left:45.70px;top:487.00px" width="52" height="52" viewBox="0 0 256 256" fill="#9cae9f"><path d="M104,40H56A16,16,0,0,0,40,56v48a16,16,0,0,0,16,16h48a16,16,0,0,0,16-16V56A16,16,0,0,0,104,40Zm0,64H56V56h48v48Zm96-64H152a16,16,0,0,0-16,16v48a16,16,0,0,0,16,16h48a16,16,0,0,0,16-16V56A16,16,0,0,0,200,40Zm0,64H152V56h48v48Zm-96,32H56a16,16,0,0,0-16,16v48a16,16,0,0,0,16,16h48a16,16,0,0,0,16-16V152A16,16,0,0,0,104,136Zm0,64H56V152h48v48Zm96-64H152a16,16,0,0,0-16,16v48a16,16,0,0,0,16,16h48a16,16,0,0,0,16-16V152A16,16,0,0,0,200,136Zm0,64H152V152h48v48Z"/></svg>
<a class="t" style="left:110.44px;top:498.74px;font-size:27.6px;line-height:27.6px;color:#9cae9f;letter-spacing:-0.347px;">Resources</a>
<svg class="i" style="left:45.70px;top:578.00px" width="52" height="52" viewBox="0 0 256 256" fill="#11152b"><path d="M224,200h-8V40a8,8,0,0,0-8-8H152a8,8,0,0,0-8,8V80H96a8,8,0,0,0-8,8v40H48a8,8,0,0,0-8,8v64H32a8,8,0,0,0,0,16H224a8,8,0,0,0,0-16ZM160,48h40V200H160ZM104,96h40V200H104ZM56,144H88v56H56Z"/></svg>
<a class="t" style="left:110.44px;top:589.74px;font-size:27.6px;line-height:27.6px;color:#11152b;letter-spacing:0.243px;-webkit-text-stroke:0.3px #11152b;">Reporting</a>
<svg class="i" style="left:45.70px;top:669.00px" width="52" height="52" viewBox="0 0 256 256" fill="#9cae9f"><path d="M168,112a8,8,0,0,1-8,8H96a8,8,0,0,1,0-16h64A8,8,0,0,1,168,112Zm-8,24H96a8,8,0,0,0,0,16h64a8,8,0,0,0,0-16Zm72-12A100.11,100.11,0,0,1,132,224H47.67A15.69,15.69,0,0,1,32,208.33V124a100,100,0,0,1,200,0Zm-16,0a84,84,0,0,0-168,0v84h84A84.09,84.09,0,0,0,216,124Z"/></svg>
<a class="t" style="left:111.31px;top:680.74px;font-size:27.6px;line-height:27.6px;color:#9cae9f;letter-spacing:-0.621px;">Calls</a>
<svg class="i" style="left:47.30px;top:760.00px" width="52" height="52" viewBox="0 0 256 256" fill="#9cae9f"><path d="M222.14,58.87A8,8,0,0,0,216,56H54.68L49.79,29.14A16,16,0,0,0,34.05,16H16a8,8,0,0,0,0,16h18L59.56,172.29a24,24,0,0,0,5.33,11.27,28,28,0,1,0,44.4,8.44h45.42A27.75,27.75,0,0,0,152,204a28,28,0,1,0,28-28H83.17a8,8,0,0,1-7.87-6.57L72.13,152h116a24,24,0,0,0,23.61-19.71l12.16-66.86A8,8,0,0,0,222.14,58.87ZM96,204a12,12,0,1,1-12-12A12,12,0,0,1,96,204Zm96,0a12,12,0,1,1-12-12A12,12,0,0,1,192,204Zm4-74.57A8,8,0,0,1,188.1,136H69.22L57.59,72H206.41Z"/></svg>
<a class="t" style="left:110.44px;top:771.74px;font-size:27.6px;line-height:27.6px;color:#9cae9f;letter-spacing:0.216px;">Marketplace</a>
<svg class="i" style="left:450.10px;top:500.30px" width="27" height="27" viewBox="0 0 256 256" fill="#9cae9f"><path d="M181.66,133.66l-80,80a8,8,0,0,1-11.32-11.32L164.69,128,90.34,53.66a8,8,0,0,1,11.32-11.32l80,80A8,8,0,0,1,181.66,133.66Z"/></svg>
<svg class="i" style="left:450.10px;top:682.30px" width="27" height="27" viewBox="0 0 256 256" fill="#9cae9f"><path d="M181.66,133.66l-80,80a8,8,0,0,1-11.32-11.32L164.69,128,90.34,53.66a8,8,0,0,1,11.32-11.32l80,80A8,8,0,0,1,181.66,133.66Z"/></svg>
<div class="b" style="left:0.00px;top:1691.50px;width:526.00px;height:2.50px;background:#f4f5f7"></div>
<svg class="i" style="left:21.00px;top:1740.20px" width="52" height="52" viewBox="0 0 256 256" fill="#9cae9f"><path d="M201.89,54.66A103.43,103.43,0,0,0,128.79,24H128A104,104,0,0,0,24,128v56a24,24,0,0,0,24,24H64a24,24,0,0,0,24-24V144a24,24,0,0,0-24-24H40.36A88.12,88.12,0,0,1,190.54,65.93,87.39,87.39,0,0,1,215.65,120H192a24,24,0,0,0-24,24v40a24,24,0,0,0,24,24h24a24,24,0,0,1-24,24H136a8,8,0,0,0,0,16h56a40,40,0,0,0,40-40V128A103.41,103.41,0,0,0,201.89,54.66ZM64,136a8,8,0,0,1,8,8v40a8,8,0,0,1-8,8H48a8,8,0,0,1-8-8V136Zm128,56a8,8,0,0,1-8-8V144a8,8,0,0,1,8-8h24v56Z"/></svg>
<svg class="i" style="left:21.60px;top:1831.00px" width="52" height="52" viewBox="0 0 256 256" fill="#9cae9f"><path d="M128,80a48,48,0,1,0,48,48A48.05,48.05,0,0,0,128,80Zm0,80a32,32,0,1,1,32-32A32,32,0,0,1,128,160Zm109.94-52.79a8,8,0,0,0-3.89-5.4l-29.83-17-.12-33.62a8,8,0,0,0-2.83-6.08,111.91,111.91,0,0,0-36.72-20.67,8,8,0,0,0-6.46.59L128,41.85,97.88,25a8,8,0,0,0-6.47-.6A112.1,112.1,0,0,0,54.73,45.15a8,8,0,0,0-2.83,6.07l-.15,33.65-29.83,17a8,8,0,0,0-3.89,5.4,106.47,106.47,0,0,0,0,41.56,8,8,0,0,0,3.89,5.4l29.83,17,.12,33.62a8,8,0,0,0,2.83,6.08,111.91,111.91,0,0,0,36.72,20.67,8,8,0,0,0,6.46-.59L128,214.15,158.12,231a7.91,7.91,0,0,0,3.9,1,8.09,8.09,0,0,0,2.57-.42,112.1,112.1,0,0,0,36.68-20.73,8,8,0,0,0,2.83-6.07l.15-33.65,29.83-17a8,8,0,0,0,3.89-5.4A106.47,106.47,0,0,0,237.94,107.21Zm-15,34.91-28.57,16.25a8,8,0,0,0-3,3c-.58,1-1.19,2.06-1.81,3.06a7.94,7.94,0,0,0-1.22,4.21l-.15,32.25a95.89,95.89,0,0,1-25.37,14.3L134,199.13a8,8,0,0,0-3.91-1h-.19c-1.21,0-2.43,0-3.64,0a8.08,8.08,0,0,0-4.1,1l-28.84,16.1A96,96,0,0,1,67.88,201l-.11-32.2a8,8,0,0,0-1.22-4.22c-.62-1-1.23-2-1.8-3.06a8.09,8.09,0,0,0-3-3.06l-28.6-16.29a90.49,90.49,0,0,1,0-28.26L61.67,97.63a8,8,0,0,0,3-3c.58-1,1.19-2.06,1.81-3.06a7.94,7.94,0,0,0,1.22-4.21l.15-32.25a95.89,95.89,0,0,1,25.37-14.3L122,56.87a8,8,0,0,0,4.1,1c1.21,0,2.43,0,3.64,0a8.08,8.08,0,0,0,4.1-1l28.84-16.1A96,96,0,0,1,188.12,55l.11,32.2a8,8,0,0,0,1.22,4.22c.62,1,1.23,2,1.8,3.06a8.09,8.09,0,0,0,3,3.06l28.6,16.29A90.49,90.49,0,0,1,222.9,142.12Z"/></svg>
<a class="t" style="left:87.44px;top:1752.04px;font-size:27.6px;line-height:27.6px;color:#9cae9f;letter-spacing:0.187px;">Support</a>
<a class="t" style="left:88.30px;top:1842.84px;font-size:27.6px;line-height:27.6px;color:#9cae9f;letter-spacing:0.177px;">Administration</a></aside>
<div id="shade"></div>
<svg class="i" style="left:3583px;top:1921px" width="7" height="5" viewBox="0 0 7 5"><path d="M7,0V5H0Z" fill="#333"/></svg>
</body></html>
